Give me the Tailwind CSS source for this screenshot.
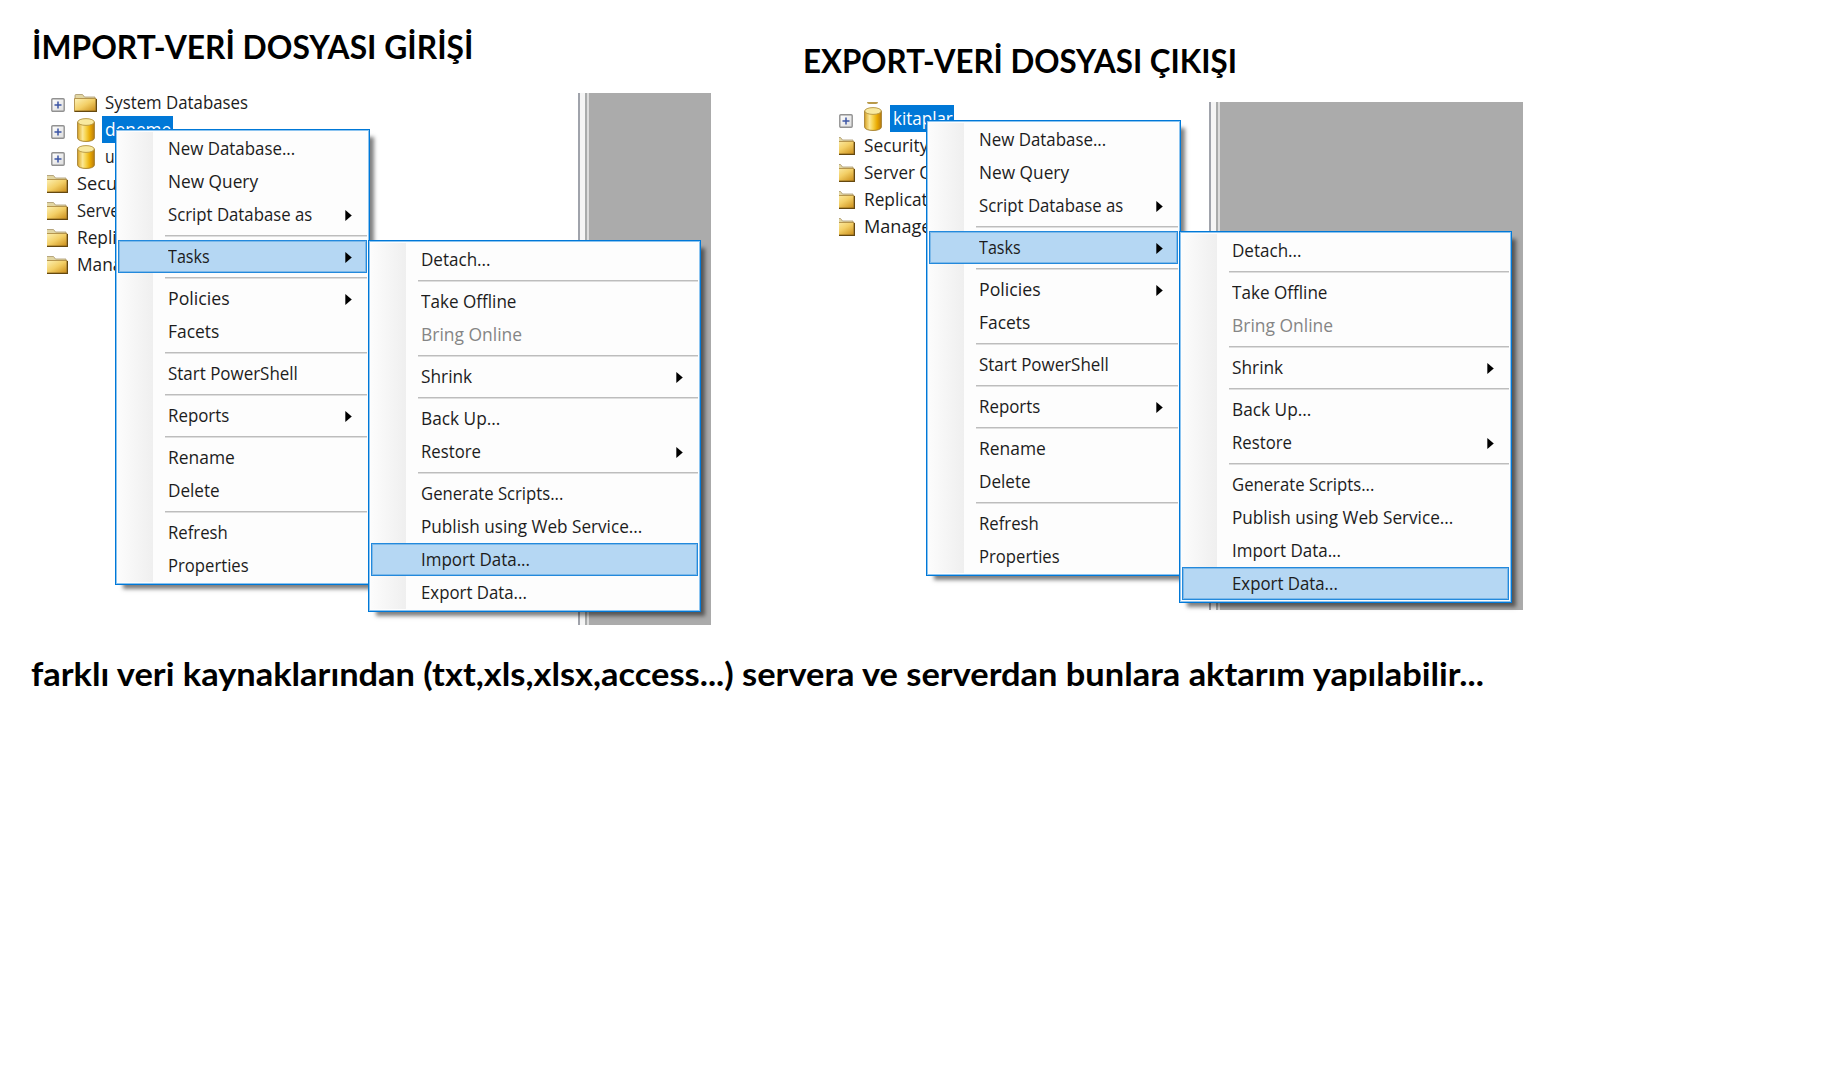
<!DOCTYPE html>
<html lang="tr">
<head>
<meta charset="utf-8">
<title>Import / Export</title>
<script src="https://cdn.jsdelivr.net/npm/@tailwindcss/browser@4"></script>
</head>
<body class="bg-white">
<svg class="absolute size-0" aria-hidden="true">
  <defs>
    <linearGradient id="gf" x1="0" y1="0" x2="1" y2="1"><stop offset="0" stop-color="#fdf3b8"/><stop offset=".5" stop-color="#f3cf66"/><stop offset="1" stop-color="#c98a14"/></linearGradient>
    <linearGradient id="gc" x1="0" x2="1"><stop offset="0" stop-color="#d9a528"/><stop offset=".3" stop-color="#fbe896"/><stop offset=".5" stop-color="#f6d24a"/><stop offset=".75" stop-color="#e8a800"/><stop offset="1" stop-color="#b87a10"/></linearGradient>
    <linearGradient id="gp" x1="0" y1="0" x2="1" y2="1"><stop offset="0" stop-color="#fff"/><stop offset="1" stop-color="#dcdcdc"/></linearGradient>
    <symbol id="folder" viewBox="0 0 23 18">
      <path d="M1 4V1.5Q1 .5 2 .5H8.500L10.500 3H21V6H1Z" fill="#e2d6a2" stroke="#a8966a" stroke-width=".8"/>
      <path d="M.5 4.500H22V17.300H.5Z" fill="url(#gf)" stroke="#b08d45" stroke-width=".9"/>
      <path d="M.5 17.300H22.400V5" fill="none" stroke="#65480f" stroke-width="1.200"/>
    </symbol>
    <symbol id="cyl" viewBox="0 0 18 24">
      <path d="M.6 4V20C.6 24.600 17.400 24.600 17.400 20V4Z" fill="url(#gc)" stroke="#a07a28" stroke-width=".9"/>
      <ellipse cx="9" cy="4" rx="8.300" ry="3.400" fill="#f8e9a0" stroke="#b3933f" stroke-width=".9"/>
    </symbol>
    <symbol id="plus" viewBox="0 0 14 14">
      <rect x=".8" y=".8" width="12.400" height="12.400" rx="1" fill="url(#gp)" stroke="#919191" stroke-width="1.400"/>
      <path d="M3.500 7H10.500M7 3.500V10.500" stroke="#3c55a5" stroke-width="1.500"/>
    </symbol>
  </defs>
</svg>

<main class="relative h-[1075px] w-[1831px] overflow-hidden bg-white font-['Open_Sans','Noto_Sans',sans-serif] text-[17.3px] text-[#1c1c1c]">
  <h1 class="absolute left-[32px] top-[27px] h-10 whitespace-nowrap font-['Lato',sans-serif] text-[31.500px] font-bold leading-10 text-black"><span class="inline-block origin-left" data-w="441">İMPORT-VERİ DOSYASI GİRİŞİ</span></h1>
  <h1 class="absolute left-[803px] top-[41px] h-10 whitespace-nowrap font-['Lato',sans-serif] text-[31.500px] font-bold leading-10 text-black"><span class="inline-block origin-left" data-w="434">EXPORT-VERİ DOSYASI ÇIKIŞI</span></h1>

  <section class="absolute left-[47px] top-[93px] h-[532px] w-[664px]" id="import"></section>
  <section class="absolute left-[839px] top-[102px] h-[508px] w-[684px]" id="export"></section>

  <p class="absolute left-[31px] top-[654px] h-10 whitespace-nowrap font-['Lato',sans-serif] text-[31.500px] font-bold leading-10 text-black"><span class="inline-block origin-left" data-w="1453">farklı veri kaynaklarından (txt,xls,xlsx,access...) servera ve serverdan bunlara aktarım yapılabilir...</span></p>
</main>

<script>
const label = (t, w, c = '') => `<span class="inline-block origin-left whitespace-nowrap ${c}" data-w="${w + 2}">${t}</span>`;

// Menu entries: [label, width, arrow, state]; null is a separator
const mainMenu = [['New Database...',125],['New Query',88],['Script Database as',142.5,1],null,['Tasks',40,1,'on'],null,['Policies',59.5,1],['Facets',49.5],null,['Start PowerShell',127.5],null,['Reports',59.5,1],null,['Rename',64.5],['Delete',49.5],null,['Refresh',58],['Properties',79]];
const tasks = on => [['Detach...',68],null,['Take Offline',93],['Bring Online',99,0,'off'],null,['Shrink',49,1],null,['Back Up...',77],['Restore',58,1],null,['Generate Scripts...',140],['Publish using Web Service...',219.5],['Import Data...',107,0,on=='import'?'on':''],['Export Data...',104,0,on=='export'?'on':'']];

function menu(items) {
  return `<div class="relative h-full w-full border border-[#0078d7] bg-[#fdfdfd] p-0.5 shadow-[6px_6px_4px_-2px_rgba(0,0,0,0.5),inset_0_0_0_1px_#8cc4f0]">
    <div class="absolute bottom-[2px] left-[2px] top-[2px] w-[35px] bg-linear-to-r from-[#fcfcfc] to-[#efefef]"></div>
    <div class="relative flex flex-col">${items.map(i => !i
      ? '<div class="flex h-[9px] items-end pb-[3px] pl-[47px]"><div class="h-[2px] w-full border-t border-[#bdbdbd] bg-[#dedede]"></div></div>'
      : `<div class="flex h-[33px] items-center justify-between pl-[50px] pr-[15px] leading-8 ${i[3]=='on' ? 'bg-[#b5d7f3] shadow-[inset_0_0_0_1px_#2389dc,inset_0_0_0_2px_#7db9e9]' : ''} ${i[3]=='off' ? 'text-[#858585]' : ''}">${label(i[0], i[1])}${i[2] ? '<svg class="mt-px h-[11px] w-[7px] shrink-0" viewBox="0 0 7 11"><path d="M.3 0L6.800 5.500L.3 11Z" fill="#000"/></svg>' : ''}</div>`).join('')}</div>
  </div>`;
}

const editor = c => `<div class="absolute inset-y-0 right-0 flex ${c}"><div class="w-[2px] bg-[#a0a3ab]"></div><div class="w-[5px] bg-[#f5f5f5]"></div><div class="w-[2px] bg-[#a9abab]"></div><div class="w-[2px] bg-[#dcdcdc]"></div><div class="flex-1 bg-[#ababab]"></div></div>`;
const plus = '<svg class="mt-1 h-[14px] w-[14px] shrink-0"><use href="#plus"/></svg>';
const cyl = '<svg class="h-[24px] w-[18px] shrink-0"><use href="#cyl"/></svg>';

const folderRow = (t, w, wide) => `<div class="flex h-[27px] items-center gap-[9px]">
  <svg class="mt-px h-[18px] shrink-0 ${wide ? 'w-[21px]' : 'w-[16px]'}" viewBox="${wide ? '2 0 21 18' : '7 0 16 18'}" preserveAspectRatio="none"><use href="#folder" width="23" height="18"/></svg>${label(t, w)}</div>`;

document.getElementById('import').innerHTML = editor('w-[133px]') + `
  <div class="-mt-[4px] flex w-[220px] flex-col">
    <div class="flex h-[27px] items-center pl-[4px]">${plus}<svg class="ml-[9px] mt-px h-[18px] w-[23px] shrink-0"><use href="#folder"/></svg><div class="ml-[8px]">${label('System Databases',141)}</div></div>
    <div class="flex h-[27px] items-center pl-[4px]">${plus}<div class="ml-[12px] mt-px flex">${cyl}</div><div class="ml-[7px] flex h-[27px] w-[71px] items-center bg-[#0078d7] pl-[3px] text-white">${label('deneme',64)}</div></div>
    <div class="flex h-[27px] items-center pl-[4px]">${plus}<div class="ml-[12px] mt-px flex">${cyl}</div><div class="ml-[10px]">${label('u',8)}</div></div>
    ${folderRow('Secu',38,1)}${folderRow('Serve',41,1)}${folderRow('Repli',38,1)}${folderRow('Mana',43,1)}
  </div>
  <div class="absolute left-[68px] top-[36px] h-[456px] w-[255px]">${menu(mainMenu)}</div>
  <div class="absolute left-[321px] top-[147px] h-[372px] w-[333px]">${menu(tasks('import'))}</div>`;

document.getElementById('export').innerHTML = editor('w-[314px]') + `
  <div class="flex w-[220px] flex-col pt-[3px]">
    <div class="flex h-[27px] items-center">${plus}<div class="ml-[11px] flex">${cyl}</div><div class="ml-[8px] flex h-[27px] w-[64px] items-center bg-[#0078d7] pl-[3px] text-white">${label('kitaplar',58)}</div></div>
    ${folderRow('Security',62)}${folderRow('Server O',67)}${folderRow('Replicat',62)}${folderRow('Manage',65)}
  </div>
  <div class="absolute left-[28px] top-0 h-[1.500px] w-[11px] rounded-b-full bg-[#b99a4a]"></div>
  <div class="absolute left-[87px] top-[18px] h-[456px] w-[255px]">${menu(mainMenu)}</div>
  <div class="absolute left-[340px] top-[129px] h-[372px] w-[333px]">${menu(tasks('export'))}</div>`;

// Scale each label horizontally to its set width, again whenever its natural width changes
const fit = e => { if (e.offsetWidth) e.style.transform = `scaleX(${e.dataset.w / e.offsetWidth})`; };
const fitAll = () => document.querySelectorAll('[data-w]').forEach(fit);
const watcher = new ResizeObserver(list => list.forEach(x => fit(x.target)));
document.querySelectorAll('[data-w]').forEach(e => watcher.observe(e));
fitAll();
addEventListener('load', fitAll);
document.fonts.ready.then(fitAll);
</script>
</body>
</html>
